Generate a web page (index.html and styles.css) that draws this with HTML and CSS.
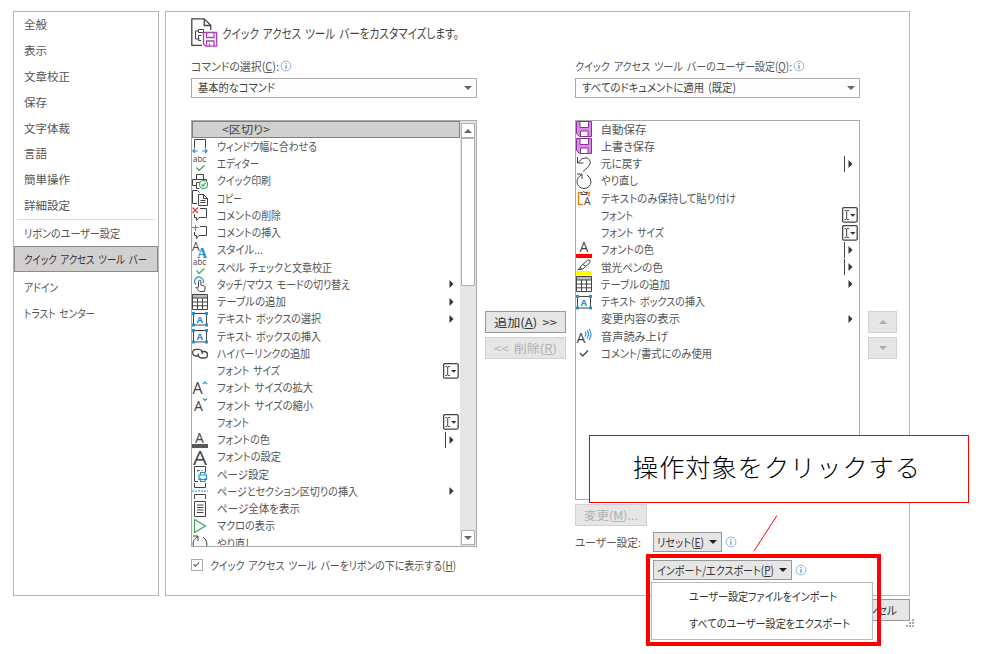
FILE: index.html
```
<!DOCTYPE html>
<html lang="ja">
<head>
    <meta charset="UTF-8">
    <meta name="viewport" content="width=device-width, initial-scale=1.0">
    <title>クイック アクセス ツール バー</title>
    <link rel="stylesheet" href="styles.css">
</head>
<body>
    <svg class="sprite">
        <symbol id="i-width" viewBox="0 0 16 16"><path class="k" d="M2.5 10V1.5h11V10"/><path class="b" d="M.8 13h5M10.2 13h5M3 11l-2 2 2 2M13 11l2 2-2 2"/></symbol>
        <symbol id="i-abc" viewBox="0 0 16 16"><text x="1" y="6" font-size="8.5" textLength="13" lengthAdjust="spacingAndGlyphs">abc</text><path class="g" d="M4.5 11.5l2.5 3 5.5-5"/></symbol>
        <symbol id="i-print" viewBox="0 0 16 16"><path class="k" d="M4.5 6V1.5h7V6M4 12.5H.5v-6h14V8M4.5 15.5v-6h4M4.5 15.5h3"/><circle class="g" cx="11.5" cy="11.5" r="4" style="fill:#fff"/><path class="g" d="M9.5 11.5l1.5 1.5 2.5-3"/></symbol>
        <symbol id="i-copy" viewBox="0 0 16 16"><path class="k" d="M5 13.5H.5V.5h5l2 2M6.5 4.5h5l4 4v7h-9zM11.5 4.5v4h4M8.5 10.5h5M8.5 12.5h5"/></symbol>
        <symbol id="i-cdel" viewBox="0 0 16 16"><path class="k" d="M8 1.5h6.500v9H7l-2.500 3v-3h-2V7"/><path class="r" d="M.5.5l5.500 5.500M6 .5L.5 6"/></symbol>
        <symbol id="i-cadd" viewBox="0 0 16 16"><path class="k" d="M8 1.5h6.5v9H7l-2.5 3v-3h-2V7"/><path class="g" d="M0 2.500h6.500M3.500 0v6"/></symbol>
        <symbol id="i-style" viewBox="0 0 16 16"><text x="0" y="9" font-size="12">A</text><text class="blue serif" x="5" y="15.500" font-size="14">A</text></symbol>
        <symbol id="i-touch" viewBox="0 0 16 16"><path class="b2" d="M4 8.500A4.300 4.300 0 1 1 11 7"/><path class="k" d="M6.500 11V5.500a1.200 1.200 0 0 1 2.400 0V9l3.500 1q1 .5.8 2l-.7 3.500H7.500L4 11.500q1-1 2.500.5"/></symbol>
        <symbol id="i-table" viewBox="0 0 16 16"><path fill="#bbb" d="M1 1h14v3H1z"/><path class="k" d="M.5.5h15v15H.5zM.5 4h15M.5 8h15M.5 11.800h15M5.500 4v11.500M10.500 4v11.500"/></symbol>
        <symbol id="i-tbox" viewBox="0 0 16 16"><path class="k" d="M1.500 3v11M14.500 3v11M2 2.500h12M2 14h12"/><text class="blue bold" x="4.500" y="11.500" font-size="9.500">A</text><path fill="#2a8fd4" d="M0 1h3v3H0zM13 1h3v3h-3zM0 12.500h3v3H0zM13 12.500h3v3h-3z"/></symbol>
        <symbol id="i-link" viewBox="0 0 16 16"><path class="k2" d="M6 11H4a3.300 3.300 0 0 1 0-6.600h3a3.300 3.300 0 0 1 3 4.600M9 6.500h3.200a3.200 3.200 0 0 1 0 6.500H9.500a3.200 3.200 0 0 1-3-4.500"/></symbol>
        <symbol id="i-grow" viewBox="0 0 16 16"><text x="0.500" y="13.500" font-size="16">A</text><path class="b" d="M11 4l2-2 2 2"/></symbol>
        <symbol id="i-shrink" viewBox="0 0 16 16"><text x="2" y="14" font-size="14">A</text><path class="b" d="M11 1.500l2 2 2-2"/></symbol>
        <symbol id="i-color" viewBox="0 0 16 16"><text x="3" y="10.500" font-size="14">A</text><path fill="#595959" d="M0 12h16v4H0z"/></symbol>
        <symbol id="i-colorr" viewBox="0 0 16 16"><text x="3.500" y="10" font-size="14">A</text><path fill="#f00" d="M0 12h16v4H0z"/></symbol>
        <symbol id="i-font" viewBox="0 0 16 16"><text x="1" y="15.500" font-size="20" textLength="14" lengthAdjust="spacingAndGlyphs">A</text></symbol>
        <symbol id="i-page" viewBox="0 0 16 16"><path class="k" d="M6 15.500H2.500V.5h11V6M5.500 5.500v-1h2M9.500 4.500h1"/><path class="b2" d="M7 9h7.500v4.500H7zM8.500 9V6.500H13V9M8.500 12v3.500H13V12"/></symbol>
        <symbol id="i-break" viewBox="0 0 16 16"><path class="k" d="M2.500 0v4.500h11V0M2.500 16v-4.500h11V16"/><path class="b" stroke-dasharray="2 1" d="M0 8h16"/></symbol>
        <symbol id="i-whole" viewBox="0 0 16 16"><path class="k" d="M2.500.5h11v15h-11zM5 4h6.500M5 6.500h6.500M5 9h6.500M5 11.500h6.500"/></symbol>
        <symbol id="i-macro" viewBox="0 0 16 16"><path class="g" d="M2.500 1.500v13l11-6.500z"/></symbol>
        <symbol id="i-redo" viewBox="0 0 16 16"><path class="k" d="M1 1h5v5M6 1.500Q1 4 1 9a7 6.500 0 0 0 14 0q0-4.500-4-7"/></symbol>
        <symbol id="i-undo" viewBox="0 0 16 16"><path class="k" d="M1.500 1v6h6M1.500 7Q6 1.500 10 1.800q5 1 4 6Q13 11 7 15.500"/></symbol>
        <symbol id="i-save" viewBox="0 0 16 16"><path fill="#d68fdc" stroke="#8b2f9c" d="M.5.5h15v15h-12l-3-3z"/><path fill="#fff" stroke="#8b2f9c" d="M4 .5h8.500v6H4zM4.500 10h7.500v5.500H4.500z"/></symbol>
        <symbol id="i-paste" viewBox="0 0 16 16"><path fill="none" stroke="#e8820c" stroke-width="1.500" d="M7 14.500H2.500v-12h2M11 2.500h2v4"/><path class="k" d="M5 4.500v-2h1.500q1-2 2.500 0H11v2z"/><text x="8" y="15" font-size="10.500" textLength="8">A</text></symbol>
        <symbol id="i-pen" viewBox="0 0 16 16"><path class="k" d="M4.500 7.500L12 .8q3 .2 2 2.700l-7 6.500H5zM4.500 8L2 10.500h3.500M7 5.500l3 2"/><path fill="#ff0" d="M0 12h16v4H0z"/></symbol>
        <symbol id="i-voice" viewBox="0 0 16 16"><text x="0.500" y="15" font-size="14">A</text><path class="b" d="M9 4q1.500 2 0 4.500M11 2.500q3 3.500 0 8M13 1q4 5 0 11"/></symbol>
        <symbol id="i-check" viewBox="0 0 16 16"><path class="k2" d="M4 8l2.700 3L12 5.500"/></symbol>
        <symbol id="m-arrow" viewBox="0 0 16 16"><path class="f" d="M6.500 4v8l4-4z"/></symbol>
        <symbol id="m-split" viewBox="0 0 16 16"><path class="k" d="M2.500 0v16"/><path class="f" d="M6.500 4v8l4-4z"/></symbol>
        <symbol id="m-combo" viewBox="0 0 16 16"><rect class="k2" x=".6" y=".6" width="14.600" height="14.600" rx="1.500"/><path class="k" d="M2.500 3.500H4l.7.8.7-.8H7M4.700 4v8M2.500 12.500H4l.7-.8.7.8H7"/><path class="f" d="M8 7h5.500l-2.700 2.700z"/></symbol>
        <symbol id="i-info" viewBox="0 0 12 12"><circle cx="6" cy="6" r="4.900" fill="#fff" stroke="#8fb4e3"/><path stroke="#4f78a8" d="M6 5.200V9M6 3v1.200"/></symbol>
    </svg>

    <div class="dialog">
        <nav class="sidebar">
            <a><span class="fit" data-w="23">全般</span></a>
            <a><span class="fit" data-w="23">表示</span></a>
            <a><span class="fit" data-w="46">文章校正</span></a>
            <a><span class="fit" data-w="23">保存</span></a>
            <a><span class="fit" data-w="46">文字体裁</span></a>
            <a><span class="fit" data-w="23">言語</span></a>
            <a><span class="fit" data-w="46">簡単操作</span></a>
            <a><span class="fit" data-w="46">詳細設定</span></a>
            <hr>
            <a><span class="fit" data-w="96">リボンのユーザー設定</span></a>
            <a class="selected"><span class="fit" data-w="123">クイック アクセス ツール バー</span></a>
            <a><span class="fit" data-w="34">アドイン</span></a>
            <a><span class="fit" data-w="71">トラスト センター</span></a>
        </nav>

        <main class="panel">
            <header>
                <svg class="doc" viewBox="0 0 27 30"><path class="k2" d="M11 27.400H.8V.8h12.400l6.500 6.500V12M13.200.8v6.700h6.500"/><path class="k" d="M7.500 11.500h5v3h-5zM7.500 13H4.500v8h4M10 22.500H7.500v-5h3"/><path fill="#fff" stroke="#b03fc0" stroke-width="1.300" d="M12.500 14.500h13.200v13.700h-11l-2.200-2.200zM15.500 14.500v5h7.500v-5M15.500 28v-5h7.500v5M18.500 25.500V28"/></svg>
                <h1><span class="fit" data-w="237">クイック アクセス ツール バーをカスタマイズします。</span></h1>
            </header>
            <div class="columns">
                <section class="commands">
                    <div class="label"><span class="fit" data-w="88">コマンドの選択(<u>C</u>):</span><svg class="info"><use href="#i-info"/></svg></div>
                    <div class="select"><span class="fit" data-w="77">基本的なコマンド</span><i class="down"></i></div>
                    <div class="list">
                        <div class="rows" id="commands"></div>
                        <div class="scrollbar"><div class="step"><i class="up"></i></div><div class="thumb"></div><div class="step last"><i class="down"></i></div></div>
                    </div>
                    <label class="check"><span class="box"><svg viewBox="0 0 12 12"><path class="k2" d="M2 5l2.200 2.500L8.500 3"/></svg></span><span class="fit" data-w="246">クイック アクセス ツール バーをリボンの下に表示する(<u>H</u>)</span></label>
                </section>
                <div class="transfer">
                    <button><span class="fit" data-w="63">追加(<u>A</u>) &gt;&gt;</span></button>
                    <button disabled><span class="fit" data-w="63">&lt;&lt; 削除(<u>R</u>)</span></button>
                </div>
                <section class="toolbar">
                    <div class="label"><span class="fit" data-w="217">クイック アクセス ツール バーのユーザー設定(<u>Q</u>):</span><svg class="info"><use href="#i-info"/></svg></div>
                    <div class="select"><span class="fit" data-w="154">すべてのドキュメントに適用 (既定)</span><i class="down"></i></div>
                    <div class="list"><div class="rows" id="toolbar"></div></div>
                    <button class="modify" disabled><span class="fit" data-w="54">変更(<u>M</u>)...</span></button>
                    <div class="custom">
                        <span class="caption"><span class="fit" data-w="66">ユーザー設定:</span></span>
                        <button><span class="fit" data-w="47">リセット(<u>E</u>)</span><i class="down"></i></button>
                        <svg class="info"><use href="#i-info"/></svg>
                    </div>
                    <div class="custom export">
                        <button><span class="fit" data-w="117">インポート/エクスポート(<u>P</u>)</span><i class="down"></i></button>
                        <svg class="info"><use href="#i-info"/></svg>
                    </div>
                </section>
                <div class="order">
                    <button disabled><i class="up"></i></button>
                    <button disabled><i class="down"></i></button>
                </div>
            </div>
        </main>
    </div>
    <footer>
        <button><span class="fit" data-w="48">キャンセル</span></button>
        <svg class="grip" viewBox="0 0 9 9"><path fill="#aaa" d="M6 0h2v2H6zM3 3h2v2H3zM6 3h2v2H6zM0 6h2v2H0zM3 6h2v2H3zM6 6h2v2H6z"/></svg>
    </footer>

    <div class="menu">
        <div><span class="fit" data-w="148">ユーザー設定ファイルをインポート</span></div>
        <div><span class="fit" data-w="161">すべてのユーザー設定をエクスポート</span></div>
    </div>
    <div class="highlight"></div>
    <svg class="pointer" viewBox="0 0 25 37"><path stroke="#f00" d="M24 .5L1 36"/></svg>
    <div class="callout"><span class="fit" data-w="288">操作対象をクリックする</span></div>

    <script src="script.js"></script>
</body>
</html>
```
FILE: styles.css
```
* {
    box-sizing: border-box;
}

body {
    margin: 0;
    width: 984px;
    height: 654px;
    overflow: hidden;
    position: relative;
    background: #fff;
    color: #555;
    font: 11.5px/17px "Noto Sans CJK JP", sans-serif;
    font-feature-settings: "palt";
    word-spacing: 2px;
}

.sprite {
    display: none;
}

.fit {
    display: inline-block;
    white-space: nowrap;
    transform-origin: left;
}

u {
    text-underline-offset: 1px;
}

/* icon strokes */
.k, .k2, .b, .b2, .g, .r {
    fill: none;
    stroke: #444;
}

.k2 {
    stroke-width: 1.3;
}

.b, .b2 {
    stroke: #2a8fd4;
}

.b, .b2, .g, .r {
    stroke-width: 1.2;
}

.g {
    stroke: #36a852;
}

.r {
    stroke: #e8393f;
}

.f {
    fill: #333;
}

symbol text {
    font-family: "Open Sans", sans-serif;
    fill: #444;
}

symbol .blue {
    fill: #2a8fd4;
}

symbol .serif {
    font-family: "Liberation Serif", serif;
    font-weight: bold;
}

symbol .bold {
    font-weight: bold;
}

/* small triangles */
.down, .up {
    width: 0;
    height: 0;
    border: 4px solid transparent;
    border-bottom: 0;
    border-top: 4px solid #666;
}

.up {
    border-top: 0;
    border-bottom: 4px solid #666;
}

.dialog {
    display: flex;
    gap: 6px;
    padding: 11px 0 0 13px;
}

.sidebar, .panel {
    height: 585px;
    border: 1px solid #b5b5b5;
}

.sidebar {
    width: 146px;
}

.sidebar a {
    display: flex;
    align-items: center;
    height: 25.8px;
    padding-left: 10px;
}

.sidebar hr {
    height: 1px;
    margin: 1px 3px 0;
    border: 0;
    background: #ddd;
}

.sidebar .selected {
    padding-left: 9px;
    border: 1px solid #8c8c8c;
    background: #d2d0ce;
    color: #333;
}

.sidebar .selected + a {
    margin-top: 3px;
}

.panel {
    width: 745px;
    padding: 6px 0 0 25px;
}

header {
    display: flex;
    height: 39px;
}

.doc {
    width: 27px;
    height: 30px;
    margin-right: 4px;
}

h1 {
    margin: 6px 0 0;
    color: #444;
    font-size: 13px;
    font-weight: normal;
}

.columns {
    display: flex;
    align-items: flex-start;
}

.commands {
    width: 286px;
}

.toolbar {
    width: 285px;
    margin: 0 8px 0 9px;
}

.label {
    display: flex;
    align-items: center;
    gap: 1px;
    height: 18px;
}

.info {
    width: 12px;
    height: 12px;
    flex: none;
}

.select {
    display: flex;
    align-items: center;
    justify-content: space-between;
    height: 20px;
    margin: 3px 0 22px;
    padding: 0 4px 1px 6px;
    border: 1px solid #ababab;
    background: #fdfdfd;
    color: #444;
}

.list {
    display: flex;
    height: 427px;
    border: 1px solid #ababab;
    overflow: hidden;
}

.toolbar .list {
    height: 380px;
}

.rows {
    flex: 1;
    margin-top: -0.5px;
}

.row {
    display: flex;
    align-items: center;
    height: 17.25px;
}

.row.selected {
    padding-left: 4px;
    border: 1px solid #80807e;
    background: #d2d0ce;
    color: #444;
}

.row svg {
    width: 16px;
    height: 16px;
    margin-left: -0.5px;
    flex: none;
}

.row .fit {
    margin-left: 9px;
}

.row .mark {
    margin-left: auto;
    margin-right: 1px;
}

.scrollbar {
    display: flex;
    flex-direction: column;
    width: 16px;
    padding: 2px 1px 1px;
    background: #e5e5e5;
}

.step {
    display: flex;
    align-items: center;
    justify-content: center;
    height: 15px;
    border: 1px solid #b0b0b0;
    background: #fff;
}

.thumb {
    height: 148px;
    border: 1px solid #b0b0b0;
    background: #fff;
}

.last {
    margin-top: auto;
}

.check {
    display: flex;
    align-items: center;
    height: 18px;
    margin-top: 9px;
}

.box {
    width: 12px;
    height: 12px;
    margin-right: 7px;
    border: 1px solid #ababab;
}

.box svg {
    display: block;
}

button {
    display: flex;
    align-items: center;
    justify-content: center;
    height: 22px;
    padding: 0;
    border: 1px solid #999;
    background: #e6e6e6;
    color: #333;
    font: inherit;
    font-feature-settings: inherit;
    word-spacing: inherit;
}

button:disabled {
    border-color: #d2d2d2;
    color: #b0b0b0;
}

button:disabled .up {
    border-bottom-color: #aaa;
}

button:disabled .down {
    border-top-color: #aaa;
}

.transfer, .order {
    display: flex;
    flex-direction: column;
    gap: 4px;
    padding-top: 254px;
}

.transfer {
    width: 81px;
    margin-left: 8px;
}

.order {
    width: 29px;
}

.modify {
    width: 72px;
    margin-top: 4px;
}

.custom {
    display: flex;
    align-items: center;
    margin-top: 6px;
}

.custom .caption {
    width: 78px;
}

.custom button {
    justify-content: space-between;
    width: 69px;
    height: 20px;
    margin-right: 3px;
    padding: 0 4px 0 3px;
}

.custom button .down {
    border-top-color: #222;
}

.export {
    margin: 8px 0 0 78px;
}

.export button {
    width: 139px;
}

footer {
    display: flex;
    justify-content: flex-end;
    width: 914px;
    padding-top: 3px;
}

footer button {
    width: 74px;
    margin-right: -4px;
}

.grip {
    width: 9px;
    height: 9px;
    margin: 20px -1px 0 0;
}

/* drop-down menu and annotations lie over the dialog */
.menu {
    position: absolute;
    left: 651px;
    top: 582px;
    width: 222px;
    height: 58px;
    padding: 0 0 0 37px;
    border: 1px solid #bbb;
    background: #fff;
    color: #333;
}

.menu div {
    display: flex;
    align-items: center;
    height: 27px;
}

.highlight {
    position: absolute;
    left: 646px;
    top: 554px;
    width: 235px;
    height: 92px;
    border: 4px solid #f00;
}

.pointer {
    position: absolute;
    left: 753px;
    top: 515px;
    width: 25px;
    height: 37px;
}

.callout {
    position: absolute;
    left: 589px;
    top: 435px;
    width: 380px;
    height: 68px;
    padding-left: 43px;
    border: 1px solid #f00;
    background: #fff;
    color: #000;
    font-size: 25px;
    font-weight: 300;
    line-height: 61px;
    letter-spacing: 1px;
    font-feature-settings: normal;
}
```
FILE: script.js
```
// [icon, text, text width, mark]
const commands = [
    ["", "<区切り>", 48, ""],
    ["i-width", "ウィンドウ幅に合わせる", 100, ""],
    ["i-abc", "エディター", 42, ""],
    ["i-print", "クイック印刷", 54, ""],
    ["i-copy", "コピー", 25, ""],
    ["i-cdel", "コメントの削除", 64, ""],
    ["i-cadd", "コメントの挿入", 64, ""],
    ["i-style", "スタイル...", 46, ""],
    ["i-abc", "スペル チェックと文章校正", 115, ""],
    ["i-touch", "タッチ/マウス モードの切り替え", 133, "m-arrow"],
    ["i-table", "テーブルの追加", 69, "m-arrow"],
    ["i-tbox", "テキスト ボックスの選択", 104, "m-arrow"],
    ["i-tbox", "テキスト ボックスの挿入", 104, ""],
    ["i-link", "ハイパーリンクの追加", 93, ""],
    ["", "フォント サイズ", 63, "m-combo"],
    ["i-grow", "フォント サイズの拡大", 96, ""],
    ["i-shrink", "フォント サイズの縮小", 96, ""],
    ["", "フォント", 32, "m-combo"],
    ["i-color", "フォントの色", 53, "m-split"],
    ["i-font", "フォントの設定", 64, ""],
    ["i-page", "ページ設定", 52, ""],
    ["i-break", "ページとセクション区切りの挿入", 141, "m-arrow"],
    ["i-whole", "ページ全体を表示", 83, ""],
    ["i-macro", "マクロの表示", 58, ""],
    ["i-redo", "やり直し", 37, ""]
];

const toolbar = [
    ["i-save", "自動保存", 46, ""],
    ["i-save", "上書き保存", 54, ""],
    ["i-undo", "元に戻す", 41, "m-split"],
    ["i-redo", "やり直し", 37, ""],
    ["i-paste", "テキストのみ保持して貼り付け", 135, ""],
    ["", "フォント", 32, "m-combo"],
    ["", "フォント サイズ", 63, "m-combo"],
    ["i-colorr", "フォントの色", 53, "m-split"],
    ["i-pen", "蛍光ペンの色", 62, "m-split"],
    ["i-table", "テーブルの追加", 69, "m-arrow"],
    ["i-tbox", "テキスト ボックスの挿入", 104, ""],
    ["", "変更内容の表示", 79, "m-arrow"],
    ["i-voice", "音声読み上げ", 67, ""],
    ["i-check", "コメント/書式にのみ使用", 111, ""]
];

function fillList(id, items) {
    const list = document.getElementById(id);
    items.forEach(([icon, text, width, mark]) => {
        const row = document.createElement("div");
        row.className = "row";
        row.innerHTML = `<svg><use href="#${icon}"/></svg><span class="fit" data-w="${width}"></span>`
            + (mark ? `<svg class="mark"><use href="#${mark}"/></svg>` : "");
        row.querySelector(".fit").textContent = text;
        list.appendChild(row);
    });
}

// squeeze each text to its UI width
function fitTexts() {
    document.querySelectorAll(".fit").forEach(el => {
        const natural = el.getBoundingClientRect().width;
        el.style.transform = `scaleX(${el.dataset.w / natural})`;
        el.style.marginRight = (el.dataset.w - natural) + "px";
    });
}

fillList("commands", commands);
fillList("toolbar", toolbar);
document.querySelector("#commands .row").classList.add("selected");
fitTexts();
```
